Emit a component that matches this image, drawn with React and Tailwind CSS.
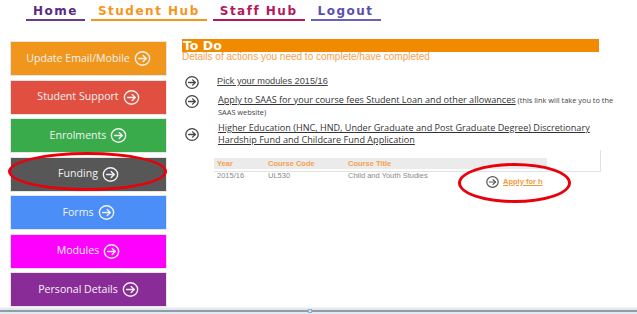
import React from "react";

function CircArrow({ w = 14, h = 13, color = "#444", sw = 1.3 }) {
  return (
    <svg width={w} height={h} viewBox="0 0 14 13" fill="none" className="shrink-0">
      <ellipse cx="7" cy="6.5" rx="6.2" ry="5.8" stroke={color} strokeWidth={sw} />
      <path d="M3.6 6.5H10.2" stroke={color} strokeWidth={sw} strokeLinecap="round" />
      <path d="M7.6 3.9L10.2 6.5L7.6 9.1" stroke={color} strokeWidth={sw} strokeLinecap="round" strokeLinejoin="round" />
    </svg>
  );
}

const navFont = { fontFamily: '"DejaVu Sans", sans-serif' };

function NavItem({ label, cls }) {
  return (
    <div className={`px-[7px] pb-[2px] border-b-2 text-[12px] leading-[12px] font-bold tracking-[1.5px] ${cls}`} style={navFont}>
      {label}
    </div>
  );
}

function SideButton({ label, bg }) {
  return (
    <div className={`h-[35px] w-[157px] flex items-center justify-center gap-[4px] border border-[#e6e6e6] ${bg}`}>
      <span className="text-[10.6px] text-[#f2f2f2]" style={{ fontFamily: '"Open Sans", sans-serif' }}>{label}</span>
      <CircArrow w={17} h={15} color="#f2f2f2" sw={1.2} />
    </div>
  );
}

export default function App() {
  const arial = { fontFamily: '"Liberation Sans", Arial, sans-serif' };
  const open = { fontFamily: '"Open Sans", sans-serif' };
  return (
    <div className="w-[637px] h-[314px] bg-white relative overflow-hidden flex flex-col">
      {/* nav */}
      <div className="h-[39px] flex items-start gap-[6px] pl-[26px] pt-[5px]">
        <NavItem label="Home" cls="text-[#5a2b82] border-[#6a3a8c]" />
        <NavItem label="Student Hub" cls="text-[#f7941d] border-[#f7941d]" />
        <NavItem label="Staff Hub" cls="text-[#b4185f] border-[#b4185f]" />
        <NavItem label="Logout" cls="text-[#5a50ae] border-[#6a62b8]" />
      </div>

      {/* body */}
      <div className="flex flex-1">
        <div className="pl-[10px] pt-[2px] flex flex-col gap-[3.5px]">
          <SideButton label="Update Email/Mobile" bg="bg-[#f0961c]" />
          <SideButton label="Student Support" bg="bg-[#e04f3f]" />
          <SideButton label="Enrolments" bg="bg-[#3aab4b]" />
          <SideButton label="Funding" bg="bg-[#575757]" />
          <SideButton label="Forms" bg="bg-[#4b8ef7]" />
          <SideButton label="Modules" bg="bg-[#fe00fe]" />
          <SideButton label="Personal Details" bg="bg-[#8a2c98]" />
        </div>

        <div className="ml-[15px] w-[446px] flex flex-col" style={arial}>
          <div className="h-[13px] w-[417px] bg-[#f28a00] text-white font-bold text-[12.5px] leading-[13px] pl-[1px] overflow-hidden" style={navFont}>
            To Do
          </div>
          <div className="text-[10px] leading-[10px] text-[#f6a04c]">Details of actions you need to complete/have completed</div>

          <div className="mt-[13px] h-[14px] flex items-center">
            <div className="ml-[3px]"><CircArrow /></div>
            <span className="ml-[18px] text-[9.2px] text-[#444] underline">Pick your modules 2015/16</span>
          </div>

          <div className="mt-[5px] flex items-start">
            <div className="ml-[3px] mt-[0.5px]"><CircArrow /></div>
            <div className="ml-[19px] w-[408px] text-[9.1px] leading-[12px] text-[#333]" style={open}>
              <span className="underline">Apply to SAAS for your course fees Student Loan and other allowances</span>
              <span className="text-[7.4px] text-[#444]"> (this link will take you to the SAAS website)</span>
            </div>
          </div>

          <div className="mt-[4px] flex items-center">
            <div className="ml-[3px]"><CircArrow /></div>
            <div className="ml-[19px] text-[9.1px] leading-[12px] text-[#333] underline" style={open}>
              Higher Education (HNC, HND, Under Graduate and Post Graduate Degree) Discretionary
              <br />
              Hardship Fund and Childcare Fund Application
            </div>
          </div>

          <div className="mt-[4px] ml-[32px] w-[387px] h-[22px] border-r border-b border-[#e2e2e2] pt-[8px]">
            <div className="w-[333px] h-[11px] bg-[#ebebeb] flex items-center text-[7.5px] font-bold text-[#f6a04c]">
              <span className="w-[54px] pl-[3px]">Year</span>
              <span className="w-[80px]">Course Code</span>
              <span>Course Title</span>
            </div>
            <div className="mt-[2px] flex items-start text-[7.5px] leading-[10px] text-[#8a8a8a]">
              <span className="w-[54px] pl-[3px]">2015/16</span>
              <span className="w-[80px]">UL530</span>
              <span className="w-[138px]">Child and Youth Studies</span>
              <div className="mt-[4.5px] flex items-center gap-[4px]">
                <CircArrow w={13} h={12} color="#555" />
                <span className="text-[#f29a3a] font-bold underline">Apply for h</span>
              </div>
            </div>
          </div>
        </div>
      </div>

      {/* bottom bar */}
      <div className="h-[7px] bg-[#e4e9ee] border-t border-[#f2f4f6] flex flex-col justify-center relative">
        <div className="h-[2px] bg-[#8d9dab]" />
        <div className="absolute left-[308px] top-[1px] w-[4px] h-[4px] bg-[#d6e6f2] border border-[#8fb0c8]" />
      </div>

      {/* red annotation ellipses */}
      <div className="absolute left-[8px] top-[152px] w-[159px] h-[39px] rounded-[50%] border-[3px] border-[#e8000b]" />
      <div className="absolute left-[458px] top-[163px] w-[113px] h-[40px] rounded-[50%] border-[3.5px] border-[#e8000b]" />
    </div>
  );
}
